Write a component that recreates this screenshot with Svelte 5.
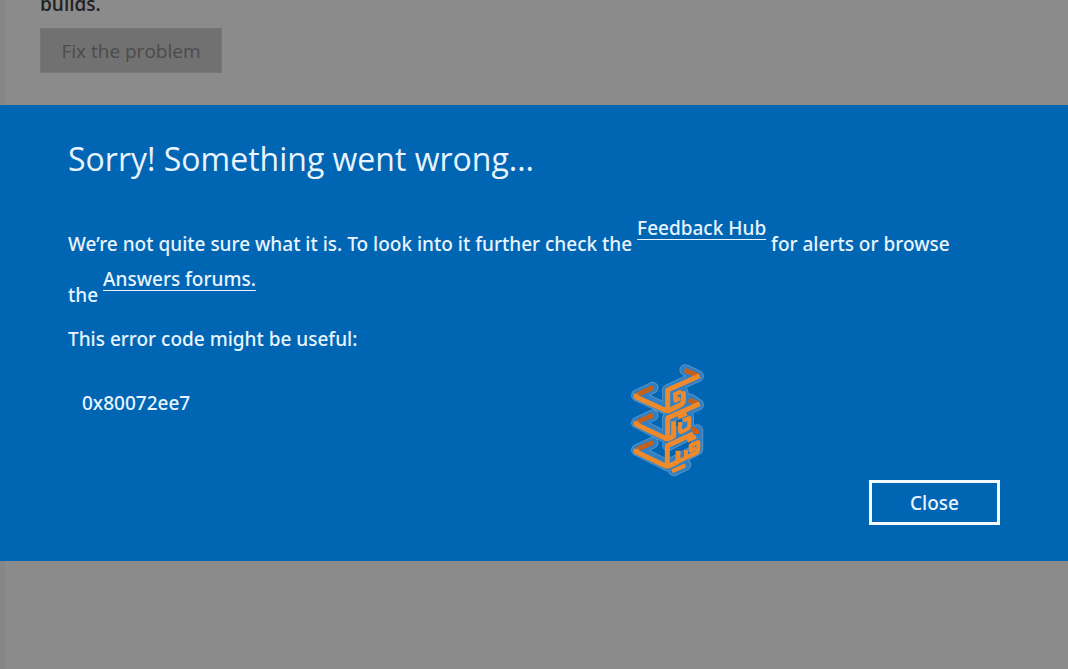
<script>
  let open = true;

  const errorCode = "0x80072ee7";

  const outline =
    "M74 77L27 100L118 142L164 120V90M172 24L210 42L120 84V140M74 160L27 182L118 228L180 196V160" +
    "M186 112L210 128L120 168V226M74 242L27 264L118 310L208 262V204L120 250M138 325L172 308";

  function close() {
    open = false;
  }
</script>

<main class="page">
  <p class="status">builds.</p>
  <button class="btn-fix" disabled>Fix the problem</button>
</main>

{#if open}
  <div class="overlay">
    <div class="dialog" role="dialog" aria-modal="true" aria-labelledby="dialog-title">
      <h1 id="dialog-title">Sorry! Something went wrong...</h1>

      <p class="message">
        We’re not quite sure what it is. To look into it further check the
        <a href="#feedback">Feedback Hub</a> for alerts or browse the
        <a href="#answers">Answers forums.</a>
      </p>
      <p class="message">This error code might be useful:</p>
      <p class="code">{errorCode}</p>

      <div class="actions">
        <button class="btn-close" on:click={close}>Close</button>
      </div>

      <svg class="logo" viewBox="0 0 240 348" aria-hidden="true">
        <path class="edge" d={outline} />
        <path class="halo" d={outline} />
        <g class="fold">
          <path d="M76 76L28 98" />
          <path d="M76 159L28 180" />
          <path d="M76 241L28 262" />
          <path d="M170 24L211 42" />
          <path d="M182 113L211 126" />
          <path d="M192 199L206 208V216" />
        </g>
        <g class="ribbon">
          <path d="M24 95V105L112 145Q119 148 119 141V84L215 41" />
          <path d="M119 148L157 129Q166 125 166 115V88" />
          <path d="M24 178V187L112 229Q119 232 119 225V168L215 125" />
          <path d="M119 232L137 222V178" />
          <path d="M24 260V269L111 311Q118 314 118 307V251L196 215" />
          <path d="M118 314L144 302Q150 299 150 292V266" />
        </g>
        <g class="ribbon inner">
          <path d="M136 99L160 88M142 98V116L156 109" />
          <path d="M156 180V206Q156 212 162 209L178 201Q184 198 184 190V168L166 176" />
          <path d="M150 166L176 155" />
          <path d="M150 299L174 287V264M174 287L202 274Q211 270 211 260V240L188 250V266L204 258" />
          <path d="M178 236L204 224M132 328L172 310" />
        </g>
      </svg>
    </div>
  </div>
{/if}

<style>
  :global(body) {
    margin: 0;
    background: #8b8b8b;
  }

  .page,
  .dialog {
    font-family: "Noto Sans", "Open Sans", sans-serif;
    font-size: 19px;
  }

  .page {
    box-sizing: border-box;
    min-height: 100vh;
    padding: 0 35px;
    border-left: 5px solid #858687;
    font-family: "Open Sans", sans-serif;
  }

  .status {
    display: flex;
    align-items: flex-end;
    height: 16px;
    margin: 0 0 12px;
    overflow: hidden;
    line-height: 24px;
    font-weight: 600;
    color: #222;
  }

  .btn-fix {
    width: 182px;
    height: 45px;
    padding: 0;
    border: 1px solid #777;
    background: #717171;
    color: #4b4b4b;
    font: inherit;
  }

  .overlay {
    position: fixed;
    inset: 0;
    display: flex;
    align-items: center;
    padding-bottom: 3px;
  }

  .dialog {
    position: relative;
    box-sizing: border-box;
    width: 100%;
    padding: 30px 68px 36px;
    background: #0066b4;
    color: #e8f4ff;
    font-weight: 500;
  }

  h1 {
    margin: 0 0 28px;
    font-family: "Open Sans", sans-serif;
    font-size: 32px;
    font-weight: 400;
    line-height: 48px;
  }

  .message {
    max-width: 890px;
    margin: 0 0 9px;
    line-height: 35px;
  }

  .message a {
    vertical-align: 16px;
    color: inherit;
    text-decoration: underline;
    text-decoration-thickness: 1px;
    text-underline-offset: 4px;
  }

  .code {
    margin: 28px 14px 59px;
    line-height: 36px;
  }

  .actions {
    display: flex;
    justify-content: flex-end;
  }

  .btn-close {
    width: 131px;
    height: 45px;
    padding: 0;
    border: 3px solid #f4faff;
    background: transparent;
    color: inherit;
    font: inherit;
    cursor: pointer;
  }

  .logo {
    position: absolute;
    right: 360px;
    bottom: 83px;
    width: 80px;
    height: 116px;
    fill: none;
    stroke-linejoin: round;
  }

  .halo {
    stroke: #2f80c4;
    stroke-width: 30;
    stroke-linecap: round;
  }

  .edge {
    stroke: #5f96c4;
    stroke-width: 35;
    stroke-linecap: round;
  }

  .fold {
    stroke: #c4601c;
    stroke-width: 15;
  }

  .ribbon {
    stroke: #ee8a2c;
    stroke-width: 15;
  }

  .inner {
    stroke-width: 12;
  }
</style>
